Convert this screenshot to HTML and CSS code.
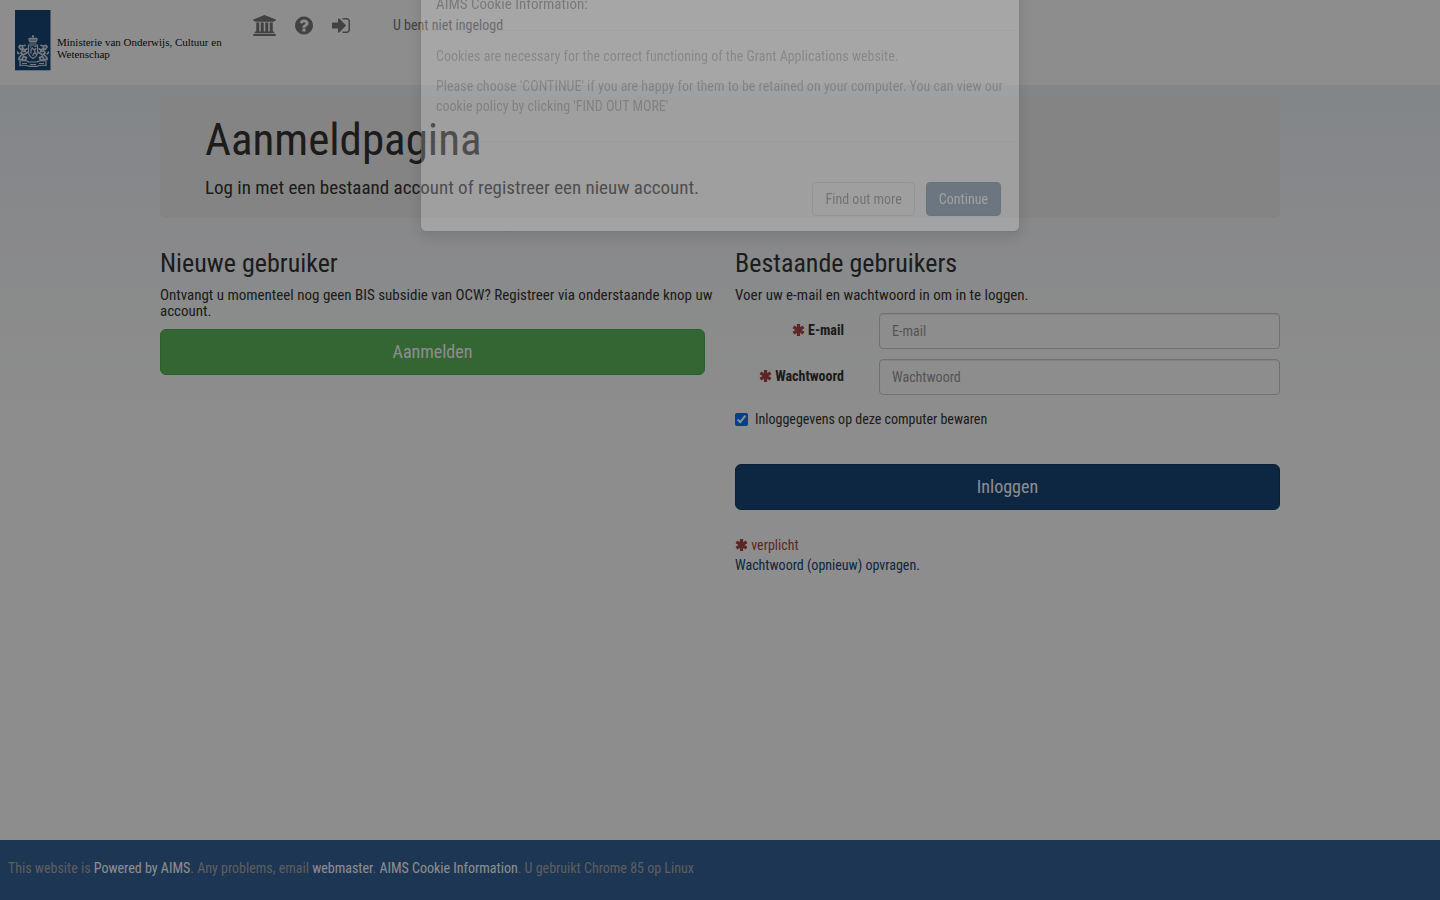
FILE: index.html
```html
<!DOCTYPE html>
<html lang="nl">
<head>
<meta charset="utf-8">
<title>Aanmeldpagina</title>
<meta name="viewport" content="width=device-width, initial-scale=1">
<link rel="stylesheet" href="styles.css">
</head>
<body>
<svg class="defs" aria-hidden="true">
  <symbol id="asterisk" viewBox="0 0 12 12">
    <path d="M6 0v12M.9 2.900l10.200 6.200M.9 9.100l10.200-6.200" stroke="currentColor" stroke-width="3.200" fill="none"/>
  </symbol>
</svg>

<header class="topbar">
  <a class="brand" href="#">
    <svg class="brand-flag" viewBox="0 0 36 61" aria-hidden="true">
      <rect width="35.500" height="60.300" fill="#184577"/>
      <g fill="none" stroke="#d5dde6" stroke-width="1.200">
        <path d="M15 31.500q-2.500-3 .5-3.300 1 1 2.500 0 1.500 1 2.500 0 3 .3.500 3.300zM18 25v3M16.800 26.500h2.400M14.500 33h7" fill="#8fa6bf"/>
        <path d="M13.500 35h9v7q0 4-4.500 6.500q-4.500-2.500-4.500-6.500z"/>
        <path d="M16 43.500v-4l1.500-1.500 1 1.500 2-.5-1 2 1.500 3-2-1-1.500 3M15 37h1.500M19.500 36.500h2"/>
        <path id="lion" d="M12.500 38.500l-2.500 1.500-2.500-1.500v-2.500l-2.500-.5-1 1.500 1.500 2 2 1-1.500 3 2.500 2 4.500-3M7 44.500l-3 3.500v1.500h3l1.500-3 3 1-1 2.500h-3M4.500 44q-2.500-.5-1.500-2.500M8 41.500h3M8.500 36l2-1" stroke-width="1.700"/>
        <use href="#lion" transform="matrix(-1 0 0 1 36 0)"/>
        <path d="M5 51q6-1 9 1h8q3-2 9-1v4.500q-5-.8-9 .8h-8q-4-1.600-9-.8zM7 53.500h5M15 54.500h6M24 53.500h5"/>
      </g>
    </svg>
    <span class="brand-text">Ministerie van Onderwijs, Cultuur en<br>Wetenschap</span>
  </a>
  <nav class="tools">
    <a href="#" aria-label="Home"><svg class="icon icon-bank" viewBox="-128 0 1920 1792"><path d="M832 0l960 384v128h-128q0 26-20.500 45t-48.500 19h-1526q-28 0-48.500-19t-20.500-45h-128v-128zm-704 640h256v768h128v-768h256v768h128v-768h256v768h128v-768h256v768h59q28 0 48.500 19t20.500 45v64h-1664v-64q0-26 20.500-45t48.500-19h59v-768zm1595 960q28 0 48.500 19t20.500 45v128h-1920v-128q0-26 20.500-45t48.500-19h1782z"/></svg></a>
    <a href="#" aria-label="Help"><svg class="icon" viewBox="128 0 1536 1792"><path d="M1024 1376v-192q0-14-9-23t-23-9h-192q-14 0-23 9t-9 23v192q0 14 9 23t23 9h192q14 0 23-9t9-23zm256-672q0-88-55.500-163t-138.500-116-170-41q-243 0-371 213-15 24 8 42l132 100q7 6 19 6 16 0 25-12 53-68 86-92 34-24 86-24 48 0 85.500 26t37.500 59q0 38-20 61t-68 45q-63 28-115.500 86.500t-52.500 125.500v36q0 14 9 23t23 9h192q14 0 23-9t9-23q0-19 21.500-49.500t54.500-49.500q32-18 49-28.500t46-35 44.500-48 28-60.500 12.500-81zm384 192q0 209-103 385.500t-279.500 279.500-385.500 103-385.500-103-279.500-279.500-103-385.500 103-385.500 279.500-279.500 385.500-103 385.500 103 279.500 279.500 103 385.500z"/></svg></a>
    <a href="#" aria-label="Inloggen"><svg class="icon" viewBox="128 0 1536 1792"><path d="M1312 896q0 26-19 45l-544 544q-19 19-45 19t-45-19-19-45v-288h-448q-26 0-45-19t-19-45v-384q0-26 19-45t45-19h448v-288q0-26 19-45t45-19 45 19l544 544q19 19 19 45zm352-352v704q0 119-84.500 203.500t-203.500 84.500h-320q-13 0-22.500-9.500t-9.500-22.500q0-4-1-20t-.5-26.500 3-23.500 10-19.500 20.500-6.500h320q66 0 113-47t47-113v-704q0-66-47-113t-113-47h-312l-11.500-1-11.500-3-8-5.500-7-9-2-13.500q0-4-1-20t-.5-26.500 3-23.500 10-19.500 20.500-6.500h320q119 0 203.500 84.500t84.500 203.500z"/></svg></a>
  </nav>
  <span class="status">U bent niet ingelogd</span>
</header>

<main class="page">
  <div class="container">
    <section class="jumbotron">
      <h1>Aanmeldpagina</h1>
      <p>Log in met een bestaand account of registreer een nieuw account.</p>
    </section>
    <div class="columns">
      <section>
        <h2>Nieuwe gebruiker</h2>
        <p class="intro intro-wide">Ontvangt u momenteel nog geen BIS subsidie van OCW? Registreer via onderstaande knop uw account.</p>
        <button class="btn btn-large btn-success" type="button">Aanmelden</button>
      </section>
      <section>
        <h2>Bestaande gebruikers</h2>
        <p class="intro">Voer uw e-mail en wachtwoord in om in te loggen.</p>
        <form>
          <div class="field">
            <label for="email"><svg class="required"><use href="#asterisk"/></svg> E-mail</label>
            <input class="control" id="email" type="email" placeholder="E-mail">
          </div>
          <div class="field">
            <label for="password"><svg class="required"><use href="#asterisk"/></svg> Wachtwoord</label>
            <input class="control" id="password" type="password" placeholder="Wachtwoord">
          </div>
          <div class="remember">
            <input id="remember" type="checkbox" checked>
            <label for="remember">Inloggegevens op deze computer bewaren</label>
          </div>
          <button class="btn btn-large btn-primary" type="button">Inloggen</button>
          <div class="legend"><svg class="required"><use href="#asterisk"/></svg> verplicht</div>
          <a class="reset" href="#">Wachtwoord (opnieuw) opvragen.</a>
        </form>
      </section>
    </div>
  </div>
</main>

<footer class="footer">
  <p>This website is <a href="#">Powered by AIMS</a>. Any problems, email <a href="#">webmaster</a>. <a href="#">AIMS Cookie Information</a>. U gebruikt Chrome 85 op Linux</p>
</footer>

<div class="backdrop"></div>
<div class="modal" role="dialog" aria-labelledby="cookie-title">
  <div class="modal-header"><h4 id="cookie-title">AIMS Cookie Information:</h4></div>
  <div class="modal-body">
    <p>Cookies are necessary for the correct functioning of the Grant Applications website.</p>
    <p>Please choose 'CONTINUE' if you are happy for them to be retained on your computer. You can view our cookie policy by clicking 'FIND OUT MORE'</p>
  </div>
  <div class="modal-footer">
    <button class="btn btn-default" type="button">Find out more</button>
    <button class="btn btn-primary" type="button">Continue</button>
  </div>
</div>
</body>
</html>
```

FILE: styles.css
```css
* { box-sizing: border-box; }

body {
  margin: 0;
  min-height: 100vh;
  display: flex;
  flex-direction: column;
  font: 14px/20px "Roboto Condensed", "Liberation Sans Narrow", Roboto, sans-serif;
  color: #333;
  background: #fff;
}

h1, h2, h4, p { margin: 0; font-weight: 400; }
a { text-decoration: none; color: #184577; }
.defs { position: absolute; width: 0; height: 0; }

.topbar {
  display: flex;
  align-items: flex-start;
  height: 85px;
  padding: 10px 15px;
}
.brand { display: flex; width: 238px; color: #111; }
.brand-flag { width: 36px; height: 61px; }
.brand-text {
  padding: 26px 0 0 6px;
  font: 11px/12px "Liberation Serif", serif;
  white-space: nowrap;
}
.tools { display: flex; gap: 19px; padding-top: 5px; }
.tools a { display: flex; }
.icon { width: 18px; height: 21px; fill: #777; }
.icon-bank { width: 23px; }
.status { padding: 5px 0 0 43px; color: #777; }

.page {
  flex: 1;
  padding-top: 11px;
  background: linear-gradient(#ebf3f8, #f2f5f9 80px, #f6f7fb 150px, #fbfdfc 250px, #fff 330px);
}
.container { width: calc(100% - 320px); max-width: 1120px; margin: 0 auto; }

.jumbotron {
  padding: 19px 45px 18px;
  background: #eee;
  border-radius: 6px;
}
.jumbotron h1 { font-size: 45px; line-height: 50px; }
.jumbotron p { padding-top: 11px; font-size: 19px; line-height: 24px; }

.columns {
  display: grid;
  grid-template-columns: 1fr 1fr;
  gap: 30px;
  padding-top: 31px;
}
h2 { font-size: 26px; line-height: 28px; margin-bottom: 10px; }
.intro { font-size: 15px; line-height: 16px; margin-bottom: 10px; }
.intro-wide { margin-right: -10px; }

.btn {
  padding: 6px 12px;
  border: 1px solid transparent;
  border-radius: 4px;
  font: inherit;
  color: #fff;
}
.btn-large {
  display: block;
  width: 100%;
  padding: 10px 16px;
  border-radius: 6px;
  font-size: 18px;
  line-height: 24px;
}
.btn-success { background: #5cb85c; border-color: #4cae4c; }
.btn-primary { background: #184577; border-color: #143a64; }
.btn-default { background: #fff; border-color: #ccc; color: #333; }

.field {
  display: grid;
  grid-template-columns: 109px 1fr;
  gap: 35px;
  margin-bottom: 10px;
}
.field label { padding-top: 7px; text-align: right; font-weight: 700; }
.required { width: 13px; height: 12px; color: #a94442; vertical-align: -1px; }
.control {
  width: 100%;
  height: 36px;
  padding: 6px 12px;
  border: 1px solid #ccc;
  border-radius: 4px;
  background: #fff;
  box-shadow: inset 0 1px 1px rgba(0, 0, 0, .075);
  font: inherit;
  color: #555;
}
.control::placeholder { color: #999; }

.remember { display: flex; align-items: center; gap: 7px; margin: 14px 0 35px; }
.remember input { width: 13px; height: 13px; margin: 0; }
.legend { margin-top: 25px; color: #a94442; }

.footer {
  display: flex;
  align-items: center;
  height: 60px;
  padding: 0 8px 4px;
  background: #366296;
  color: #aaa;
}
.footer a { color: #fff; }

.backdrop { position: fixed; inset: 0; background: #000; opacity: .447; }
.modal {
  position: fixed;
  top: -21px;
  left: 50%;
  width: 600px;
  margin-left: -300px;
  border: 1px solid rgba(0, 0, 0, .2);
  border-radius: 6px;
  background: #fff;
  background-clip: padding-box;
  box-shadow: 0 5px 15px rgba(0, 0, 0, .5);
  opacity: .22;
}
.modal-header { padding: 14px 15px 16px; border-bottom: 1px solid #eee; }
.modal-header h4 { font-size: 15px; line-height: 20px; }
.modal-body { padding: 15px 15px 5px; color: #777; }
.modal-body p { padding-bottom: 10px; }
.modal-body p:last-child { padding-bottom: 20px; }
.modal-footer {
  display: flex;
  justify-content: flex-end;
  gap: 11px;
  padding: 40px 18px 15px;
  border-top: 1px solid #eee;
}
```
